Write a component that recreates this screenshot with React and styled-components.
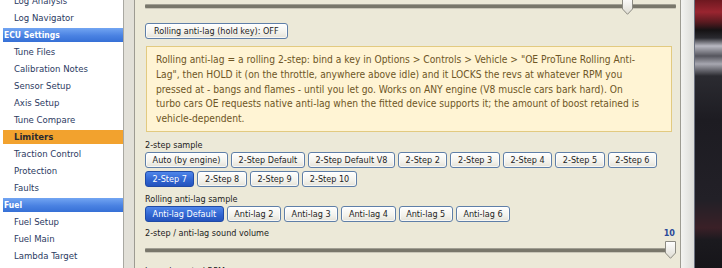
import React from "react";
import styled, { createGlobalStyle, css } from "styled-components";

const GlobalStyle = createGlobalStyle`
  html, body {
    margin: 0;
    padding: 0;
    background: #ece9d8;
    overflow: hidden;
  }
  body {
    font-family: "DejaVu Sans Condensed", "DejaVu Sans", sans-serif;
  }
`;

const Shell = styled.div`
  display: flex;
  height: 268px;
  overflow: hidden;
`;

const Sidebar = styled.nav`
  flex: none;
  width: 123px;
  background: #fff;
  border-right: 1px solid #a9a8a2;
  overflow: hidden;
`;

const NavList = styled.ul`
  list-style: none;
  margin: -8px 0 0;
  padding: 0 0 0 3px;
`;

const NavItem = styled.li`
  height: 17px;
  line-height: 17px;
  padding-left: 11px;
  font-size: 9.5px;
  color: #2b3a62;
  white-space: nowrap;
  ${(p) =>
    p.$active &&
    css`
      height: 14px;
      line-height: 14px;
      margin: 2px 0 1px;
      background: #f2a22e;
      font-weight: bold;
      color: #2a2a30;
    `}
`;

const NavHeader = styled.li`
  height: 14px;
  line-height: 14px;
  margin: 2px 0 1px;
  padding-left: 1px;
  font-size: 8.5px;
  font-weight: bold;
  color: #fff;
  background: linear-gradient(#72a5f2, #4a82e2 55%, #3670d6);
`;

const Gutter = styled.div`
  flex: none;
  width: 10px;
  background: #e2e0d8;
`;

const Panel = styled.main`
  flex: none;
  width: 531px;
  padding: 0 4px 0 10px;
  background: #ece9d8;
  border-left: 1px solid #9d9b92;
  border-right: 1px solid #9d9b92;
  display: flex;
  flex-direction: column;
  font-size: 9px;
  color: #1e1e1e;

  & > * {
    flex-shrink: 0;
  }
`;

const Splitter = styled.div`
  flex: none;
  width: 13px;
  background: linear-gradient(to right, #f3f3f1, #dcdcd8);
  border-right: 1px solid #6b7180;
`;

const Backdrop = styled.div`
  flex: 1;
  background: linear-gradient(
    #6e1820 0px,
    #9a2530 12px,
    #5a1a20 22px,
    #151214 30px,
    #2a2a30 38px,
    #b9b9c2 46px,
    #55555d 56px,
    #a7a7b0 64px,
    #2b2b31 76px,
    #1d1c22 120px,
    #222027 200px,
    #3a2027 228px,
    #1b1a1f 240px,
    #161519 268px
  );
`;

const SliderWrap = styled.div`
  position: relative;
  height: 18px;
  margin-top: ${(p) => p.$top}px;
`;

const Track = styled.div`
  position: absolute;
  left: 0;
  right: 0;
  top: 8px;
  height: 3px;
  background: #79776b;
  border-radius: 1px;
  box-shadow: 0 1px 0 #c9c6b8, 0 -1px 0 #a19f93;
`;

const Thumb = styled.svg`
  position: absolute;
  top: 0;
  width: 11px;
  height: 18px;
`;

function Slider({ value, top }) {
  return (
    <SliderWrap $top={top}>
      <Track />
      <Thumb viewBox="0 0 11 18" style={{ left: `calc((100% - 11px) * ${value})` }}>
        <defs>
          <linearGradient id="thumbFill" x1="0" y1="0" x2="0" y2="1">
            <stop offset="0" stopColor="#ffffff" />
            <stop offset="1" stopColor="#dedcd2" />
          </linearGradient>
        </defs>
        <path
          d="M0.5 0.5 H10.5 V12 L5.5 17.3 L0.5 12 Z"
          fill="url(#thumbFill)"
          stroke="#8c8b82"
        />
      </Thumb>
    </SliderWrap>
  );
}

const Button = styled.button`
  box-sizing: border-box;
  height: 16px;
  margin: 0;
  padding: 0 6.6px;
  font-family: inherit;
  font-size: 9px;
  line-height: 14px;
  white-space: nowrap;
  color: #1e1e1e;
  border: 1px solid #5f7fa8;
  border-radius: 3px;
  background: linear-gradient(#ffffff, #f3f2ec 60%, #e4e2d8);
  box-shadow: inset 0 0 0 1px rgba(255, 255, 255, 0.7);
  ${(p) =>
    p.$active &&
    css`
      color: #fff;
      border-color: #1f4aa6;
      background: linear-gradient(#4f86ea, #2f63cf 60%, #2453bd);
      box-shadow: none;
    `}
`;

const ToggleButton = styled(Button)`
  align-self: flex-start;
  margin-top: 8px;
  padding: 0 8px;
`;

const InfoBox = styled.div`
  margin: 7px 4px 0 1px;
  padding: 6px 9px 4px;
  border: 1px solid #e2ca80;
  background: #fff4d4;
  color: #6e5626;
  font-size: 10.2px;
  line-height: 14.75px;
  white-space: nowrap;
  overflow: hidden;
`;

const Label = styled.div`
  margin-top: ${(p) => p.$top}px;
  height: 12px;
  line-height: 12px;
  font-size: 9px;
  color: #222;
  white-space: nowrap;
`;

const LabelRow = styled(Label)`
  display: flex;
  justify-content: space-between;
  padding-right: 1px;
`;

const Value = styled.span`
  font-weight: bold;
  color: #2b4a98;
`;

const ButtonRow = styled.div`
  display: flex;
  gap: 3px;
  margin-top: ${(p) => p.$top}px;
`;

const navItems = [
  { label: "Log Analysis" },
  { label: "Log Navigator" },
  { header: "ECU Settings" },
  { label: "Tune Files" },
  { label: "Calibration Notes" },
  { label: "Sensor Setup" },
  { label: "Axis Setup" },
  { label: "Tune Compare" },
  { label: "Limiters", active: true },
  { label: "Traction Control" },
  { label: "Protection" },
  { label: "Faults" },
  { header: "Fuel" },
  { label: "Fuel Setup" },
  { label: "Fuel Main" },
  { label: "Lambda Target" },
  { label: "VE Table" },
];

const infoLines = [
  'Rolling anti-lag = a rolling 2-step: bind a key in Options > Controls > Vehicle > "OE ProTune Rolling Anti-',
  'Lag", then HOLD it (on the throttle, anywhere above idle) and it LOCKS the revs at whatever RPM you',
  "pressed at - bangs and flames - until you let go. Works on ANY engine (V8 muscle cars bark hard). On",
  "turbo cars OE requests native anti-lag when the fitted device supports it; the amount of boost retained is",
  "vehicle-dependent.",
];

const twoStepRow1 = [
  "Auto (by engine)",
  "2-Step Default",
  "2-Step Default V8",
  "2-Step 2",
  "2-Step 3",
  "2-Step 4",
  "2-Step 5",
  "2-Step 6",
];
const twoStepRow2 = ["2-Step 7", "2-Step 8", "2-Step 9", "2-Step 10"];
const antiLag = [
  "Anti-lag Default",
  "Anti-lag 2",
  "Anti-lag 3",
  "Anti-lag 4",
  "Anti-lag 5",
  "Anti-lag 6",
];

export default function App() {
  const twoStep = "2-Step 7";
  const antiLagSample = "Anti-lag Default";
  return (
    <>
      <GlobalStyle />
      <Shell>
        <Sidebar>
          <NavList>
            {navItems.map((item) =>
              item.header ? (
                <NavHeader key={item.header}>{item.header}</NavHeader>
              ) : (
                <NavItem key={item.label} $active={item.active}>
                  {item.label}
                </NavItem>
              )
            )}
          </NavList>
        </Sidebar>
        <Gutter />
        <Panel>
          <Slider value={0.917} top={-3} />
          <ToggleButton>Rolling anti-lag (hold key): OFF</ToggleButton>
          <InfoBox>
            {infoLines.map((line) => (
              <div key={line}>{line}</div>
            ))}
          </InfoBox>
          <Label $top={7}>2-step sample</Label>
          <ButtonRow $top={1}>
            {twoStepRow1.map((b) => (
              <Button key={b} $active={b === twoStep}>
                {b}
              </Button>
            ))}
          </ButtonRow>
          <ButtonRow $top={3}>
            {twoStepRow2.map((b) => (
              <Button key={b} $active={b === twoStep}>
                {b}
              </Button>
            ))}
          </ButtonRow>
          <Label $top={6}>Rolling anti-lag sample</Label>
          <ButtonRow $top={1}>
            {antiLag.map((b) => (
              <Button key={b} $active={b === antiLagSample}>
                {b}
              </Button>
            ))}
          </ButtonRow>
          <LabelRow $top={5}>
            <span>2-step / anti-lag sound volume</span>
            <Value>10</Value>
          </LabelRow>
          <Slider value={1} top={2} />
          <Label $top={6}>Launch control RPM</Label>
        </Panel>
        <Splitter />
        <Backdrop />
      </Shell>
    </>
  );
}
